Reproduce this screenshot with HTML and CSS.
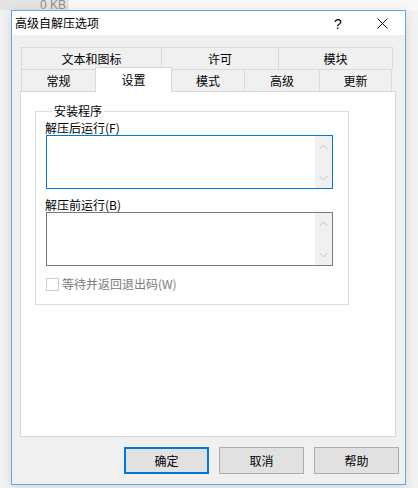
FILE: index.html
```html
<!DOCTYPE html>
<html lang="zh-CN">

<head>
    <meta charset="UTF-8">
    <meta name="viewport" content="width=device-width, initial-scale=1.0">
    <title>高级自解压选项</title>
    <link rel="stylesheet" href="styles.css">
</head>

<body>

    <div class="desk-top">
        <div class="file-size">0 KB</div>
    </div>

    <div class="dialog">
        <div class="titlebar">
            <div class="title">高级自解压选项</div>
            <div class="title-btn help">?</div>
            <div class="title-btn close">
                <svg width="11" height="11" viewBox="0 0 11 11">
                    <path d="M0.5 0.5 L10.5 10.5 M10.5 0.5 L0.5 10.5" stroke="#111" stroke-width="1" fill="none" />
                </svg>
            </div>
        </div>

        <div class="content">
            <!-- onglets sur deux rangées -->
            <div class="tabs">
                <div class="tab-row">
                    <div class="tab w140">文本和图标</div>
                    <div class="tab w117">许可</div>
                    <div class="tab w115 last">模块</div>
                </div>
                <div class="tab-row">
                    <div class="tab w74">常规</div>
                    <div class="tab w77 active">设置</div>
                    <div class="tab w73">模式</div>
                    <div class="tab w75">高级</div>
                    <div class="tab w73 last">更新</div>
                </div>
            </div>

            <div class="panel">
                <fieldset class="group">
                    <legend>安装程序</legend>

                    <div class="field-label">解压后运行(F)</div>
                    <div class="textbox focused">
                        <div class="text-area"></div>
                        <div class="scroll">
                            <svg width="9" height="6" viewBox="0 0 9 6"><path d="M0.5 5 L4.5 1 L8.5 5" stroke="#c2c2c2" fill="none" /></svg>
                            <svg width="9" height="6" viewBox="0 0 9 6"><path d="M0.5 1 L4.5 5 L8.5 1" stroke="#c2c2c2" fill="none" /></svg>
                        </div>
                    </div>

                    <div class="field-label second">解压前运行(B)</div>
                    <div class="textbox">
                        <div class="text-area"></div>
                        <div class="scroll">
                            <svg width="9" height="6" viewBox="0 0 9 6"><path d="M0.5 5 L4.5 1 L8.5 5" stroke="#c2c2c2" fill="none" /></svg>
                            <svg width="9" height="6" viewBox="0 0 9 6"><path d="M0.5 1 L4.5 5 L8.5 1" stroke="#c2c2c2" fill="none" /></svg>
                        </div>
                    </div>

                    <div class="check-row">
                        <span class="checkbox"></span>
                        <span class="check-label">等待并返回退出码(W)</span>
                    </div>
                </fieldset>
            </div>

            <div class="buttons">
                <button class="default">确定</button>
                <button>取消</button>
                <button>帮助</button>
            </div>
        </div>
    </div>

</body>

</html>
```

FILE: styles.css
```css
/* Styles généraux */
* {
    margin: 0;
    padding: 0;
    box-sizing: border-box;
}

body {
    width: 418px;
    height: 488px;
    overflow: hidden;
    background-color: #f2f2f2;
    font-family: "Noto Sans CJK SC", "Noto Sans", sans-serif;
    font-size: 12px;
    color: #000;
}

/* bandeau du bureau derrière la fenêtre */
.desk-top {
    height: 10px;
    background-color: #f8f8f8;
    overflow: hidden;
}

.file-size {
    width: 69px;
    height: 10px;
    background-color: #e4e4e4;
    color: #8d8d8d;
    font-family: "Liberation Sans", sans-serif;
    font-size: 12px;
    line-height: 10px;
    padding-left: 40px;
    overflow: hidden;
    white-space: nowrap;
}

/* fenêtre */
.dialog {
    margin-left: 11px;
    width: 395px;
    height: 475px;
    border: 1px solid #6aa6dc;
    background-color: #f0f0f0;
    display: flex;
    flex-direction: column;
    box-shadow: 0 2px 10px rgba(0, 0, 0, 0.12);
}

.titlebar {
    height: 24px;
    background-color: #fff;
    display: flex;
    align-items: center;
}

.title {
    flex: 1;
    padding-left: 3px;
    font-size: 12px;
    line-height: 24px;
}

.title-btn {
    height: 24px;
    display: flex;
    align-items: center;
    justify-content: center;
}

.help {
    width: 44px;
    font-family: "Liberation Sans", sans-serif;
    font-size: 14px;
    padding-top: 1px;
}

.close {
    width: 45px;
    padding-top: 1px;
}

.content {
    padding: 12px 9px 0 8px;
}

/* onglets */
.tabs {
    display: flex;
    flex-direction: column;
    padding-left: 1px;
}

.tab-row {
    display: flex;
    height: 22px;
}

.tab {
    height: 22px;
    border-top: 1px solid #d9d9d9;
    border-left: 1px solid #d9d9d9;
    background-color: #f0f0f0;
    text-align: center;
    line-height: 21px;
}

.tab.last {
    border-right: 1px solid #d9d9d9;
}

.tab.active {
    position: relative;
    z-index: 1;
    height: 25px;
    margin-top: -2px;
    background-color: #fff;
    border-right: 1px solid #d9d9d9;
    margin-right: -1px;
    line-height: 23px;
}

.w140 { width: 140px; }
.w117 { width: 117px; }
.w115 { width: 115px; }
.w77 { width: 77px; }
.w75 { width: 75px; }
.w74 { width: 74px; }
.w73 { width: 73px; }

/* panneau de l'onglet actif */
.panel {
    height: 346px;
    background-color: #fff;
    border: 1px solid #d9d9d9;
    padding: 12px 0 0 14px;
}

.group {
    width: 314px;
    border: 1px solid #dcdcdc;
    padding: 0 0 13px 10px;
}

.group legend {
    margin-left: 6px;
    padding: 0 2px;
    line-height: 14px;
}

.field-label {
    line-height: 14px;
    margin-top: 3px;
    margin-left: -1px;
}

.field-label.second {
    margin-top: 9px;
}

.textbox {
    width: 287px;
    height: 54px;
    border: 1px solid #7a7a7a;
    display: flex;
}

.textbox.focused {
    border-color: #0078d7;
}

.text-area {
    flex: 1;
}

.scroll {
    width: 17px;
    background-color: #f0f0f0;
    display: flex;
    flex-direction: column;
    justify-content: space-between;
    align-items: center;
    padding: 8px 0 7px;
}

.scroll svg {
    display: block;
}

.check-row {
    display: flex;
    align-items: center;
    margin-top: 11px;
    height: 14px;
}

.checkbox {
    width: 13px;
    height: 13px;
    border: 1px solid #cccccc;
    background-color: #fff;
    margin-right: 3px;
}

.check-label {
    color: #7b7b7b;
    line-height: 14px;
}

/* boutons du bas */
.buttons {
    display: flex;
    justify-content: flex-end;
    gap: 10px;
    margin-top: 10px;
    margin-right: -3px;
}

button {
    width: 85px;
    height: 27px;
    background-color: #e1e1e1;
    border: 1px solid #adadad;
    font-family: "Noto Sans CJK SC", sans-serif;
    font-size: 12px;
    color: #000;
}

button.default {
    border: 2px solid #0078d7;
}
```
